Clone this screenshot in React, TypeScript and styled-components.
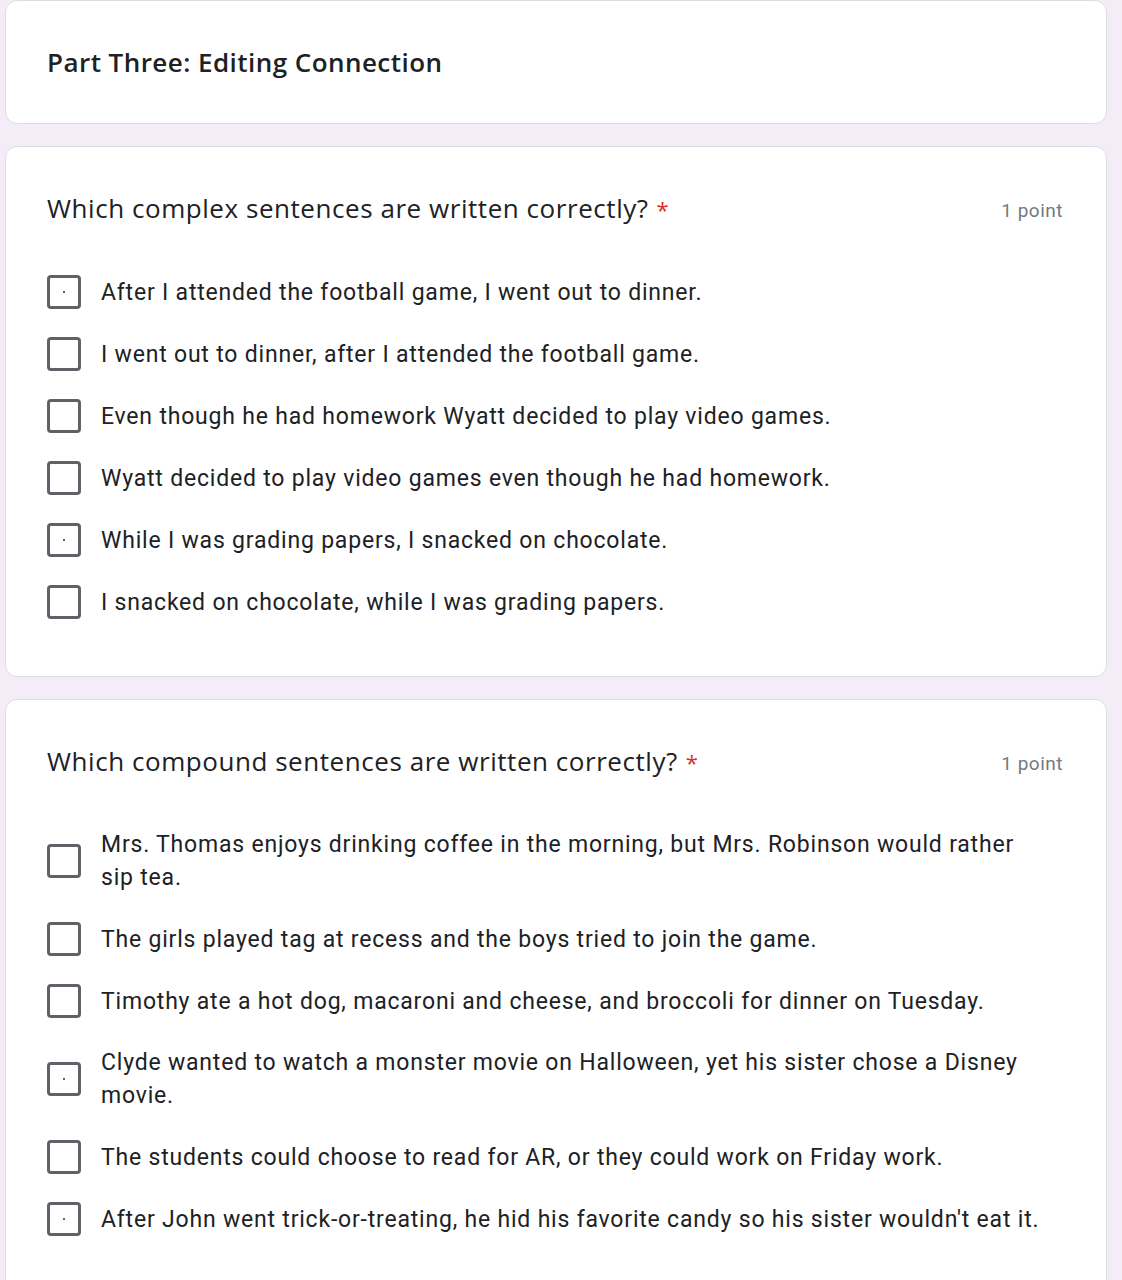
import React from 'react'
import styled, { createGlobalStyle } from 'styled-components'

const GlobalStyle = createGlobalStyle`
  body {
    margin: 0;
    background: #f4edf7;
    font-family: Roboto, "Liberation Sans", sans-serif;
    color: #202124;
  }
`

const Page = styled.div`
  display: flex;
  flex-direction: column;
  gap: 22px;
  padding: 0 15px 0 5px;
`

const Card = styled.div`
  background: #fff;
  border: 1px solid #dadce0;
  border-radius: 12px;
  padding: 43px 43px 43px 41px;
`

const SectionTitle = styled.div`
  font-family: 'Open Sans', Roboto, sans-serif;
  font-size: 26px;
  line-height: 36px;
  font-weight: 600;
  letter-spacing: 0.45px;
`

const QuestionHeader = styled.div`
  display: flex;
  align-items: center;
  justify-content: space-between;
  margin-bottom: 34px;
`

const QuestionTitle = styled.div`
  font-family: 'Open Sans', Roboto, sans-serif;
  font-size: 26px;
  line-height: 36px;
  letter-spacing: 0.55px;
`

const Required = styled.span`
  color: #d93025;
  margin-left: 8px;
  font-size: 22px;
`

const Points = styled.div`
  font-size: 19px;
  letter-spacing: 0.5px;
  color: #757a7f;
  margin-top: 4px;
`

const Options = styled.div`
  display: flex;
  flex-direction: column;
  padding-right: 21px;
`

const Option = styled.label`
  display: flex;
  align-items: center;
  gap: 20px;
  padding: 14px 0;
  font-size: 23px;
  line-height: 33px;
  letter-spacing: 0.8px;
`

const Checkbox = styled.span<{ $marked?: boolean }>`
  flex: none;
  position: relative;
  width: 34px;
  height: 34px;
  box-sizing: border-box;
  border: 3px solid #5f6368;
  border-radius: 4px;

  &::after {
    content: '';
    display: ${({ $marked }) => ($marked ? 'block' : 'none')};
    position: absolute;
    left: 13px;
    top: 13px;
    width: 2px;
    height: 2px;
    background: #5f6368;
  }
`

type Question = {
  title: string
  options: { text: string; marked?: boolean }[]
}

const questions: Question[] = [
  {
    title: 'Which complex sentences are written correctly?',
    options: [
      { text: 'After I attended the football game, I went out to dinner.', marked: true },
      { text: 'I went out to dinner, after I attended the football game.' },
      { text: 'Even though he had homework Wyatt decided to play video games.' },
      { text: 'Wyatt decided to play video games even though he had homework.' },
      { text: 'While I was grading papers, I snacked on chocolate.', marked: true },
      { text: 'I snacked on chocolate, while I was grading papers.' },
    ],
  },
  {
    title: 'Which compound sentences are written correctly?',
    options: [
      { text: 'Mrs. Thomas enjoys drinking coffee in the morning, but Mrs. Robinson would rather sip tea.' },
      { text: 'The girls played tag at recess and the boys tried to join the game.' },
      { text: 'Timothy ate a hot dog, macaroni and cheese, and broccoli for dinner on Tuesday.' },
      { text: 'Clyde wanted to watch a monster movie on Halloween, yet his sister chose a Disney movie.', marked: true },
      { text: 'The students could choose to read for AR, or they could work on Friday work.' },
      { text: "After John went trick-or-treating, he hid his favorite candy so his sister wouldn't eat it.", marked: true },
    ],
  },
]

export default function App() {
  return (
    <>
      <GlobalStyle />
      <Page>
        <Card>
          <SectionTitle>Part Three: Editing Connection</SectionTitle>
        </Card>
        {questions.map((q) => (
          <Card key={q.title}>
            <QuestionHeader>
              <QuestionTitle>
                {q.title}
                <Required>*</Required>
              </QuestionTitle>
              <Points>1 point</Points>
            </QuestionHeader>
            <Options>
              {q.options.map((o) => (
                <Option key={o.text}>
                  <Checkbox $marked={o.marked} />
                  <span>{o.text}</span>
                </Option>
              ))}
            </Options>
          </Card>
        ))}
      </Page>
    </>
  )
}
